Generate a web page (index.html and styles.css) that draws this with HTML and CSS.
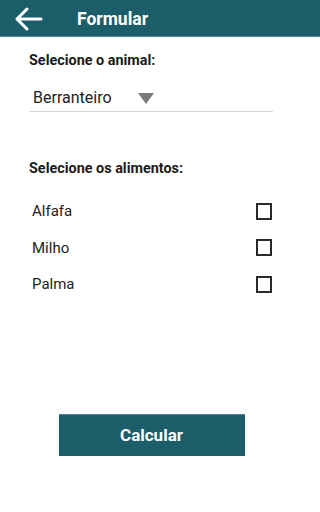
FILE: index.html
```
<!DOCTYPE html>
<html>
<head>
<meta charset="utf-8">
<link rel="stylesheet" href="styles.css">
</head>
<body>
<header class="appbar">
  <svg class="back" width="30" height="26" viewBox="0 0 30 26">
    <path d="M28 13H4M14 3L4 13L14 23" fill="none" stroke="#fff" stroke-width="3" stroke-linecap="round" stroke-linejoin="round"/>
  </svg>
  <span class="title">Formular</span>
</header>
<main class="content">
  <div class="label first">Selecione o animal:</div>
  <div class="select">
    <span class="select-text">Berranteiro</span>
    <span class="caret"></span>
  </div>
  <div class="label second">Selecione os alimentos:</div>
  <ul class="items">
    <li class="item"><span>Alfafa</span><span class="box"></span></li>
    <li class="item"><span>Milho</span><span class="box"></span></li>
    <li class="item"><span>Palma</span><span class="box"></span></li>
  </ul>
  <div class="actions">
    <button class="btn">Calcular</button>
  </div>
</main>
</body>
</html>
```
FILE: styles.css
```
* { box-sizing: border-box; }
html, body { margin: 0; padding: 0; background: #fff; }
body { font-family: Roboto, "Liberation Sans", sans-serif; color: #222; height: 512px; overflow: hidden; }
.appbar {
  height: 37px;
  background: #1c5d6a;
  border-bottom: 1px solid #5a8d96;
  display: flex;
  align-items: center;
  padding-left: 13px;
}
.back { display: block; margin-top: 1px; }
.title {
  color: #fff;
  font-weight: bold;
  font-size: 17.5px;
  margin-left: 34px;
  margin-top: 2px;
}
.content { width: 288px; padding: 0 15px 0 29px; }
.label { font-weight: bold; font-size: 14.4px; color: #1a1a1a; }
.label.first { margin-top: 15px; line-height: 18px; }
.select {
  margin-top: 19px;
  height: 23px;
  border-bottom: 1px solid #d6d6d6;
  display: flex;
  align-items: flex-start;
  padding-left: 4px;
}
.select-text { font-size: 16px; line-height: 18px; color: #222; }
.caret {
  width: 0; height: 0;
  border-left: 8.5px solid transparent;
  border-right: 8.5px solid transparent;
  border-top: 11px solid #7a7a7a;
  margin-left: 26px;
  margin-top: 4px;
}
.label.second { margin-top: 48px; line-height: 18px; }
.items { list-style: none; margin: 15px 0 0; padding: 0; }
.item {
  display: flex;
  justify-content: space-between;
  align-items: center;
  height: 36.5px;
  font-size: 15px;
  padding-left: 3px;
  padding-right: 1px;
  color: #222;
}
.box { width: 16px; height: 17px; border: 2px solid #2a2a2a; }
.actions { display: flex; justify-content: center; margin-top: 111px; }
.btn {
  margin-left: 1px;
  width: 186px;
  height: 42px;
  background: #1c5d6a;
  border: none;
  border-top: 1px solid #4b8590;
  color: #fff;
  font-family: Roboto, "Liberation Sans", sans-serif;
  font-weight: bold;
  font-size: 17px;
}
```
